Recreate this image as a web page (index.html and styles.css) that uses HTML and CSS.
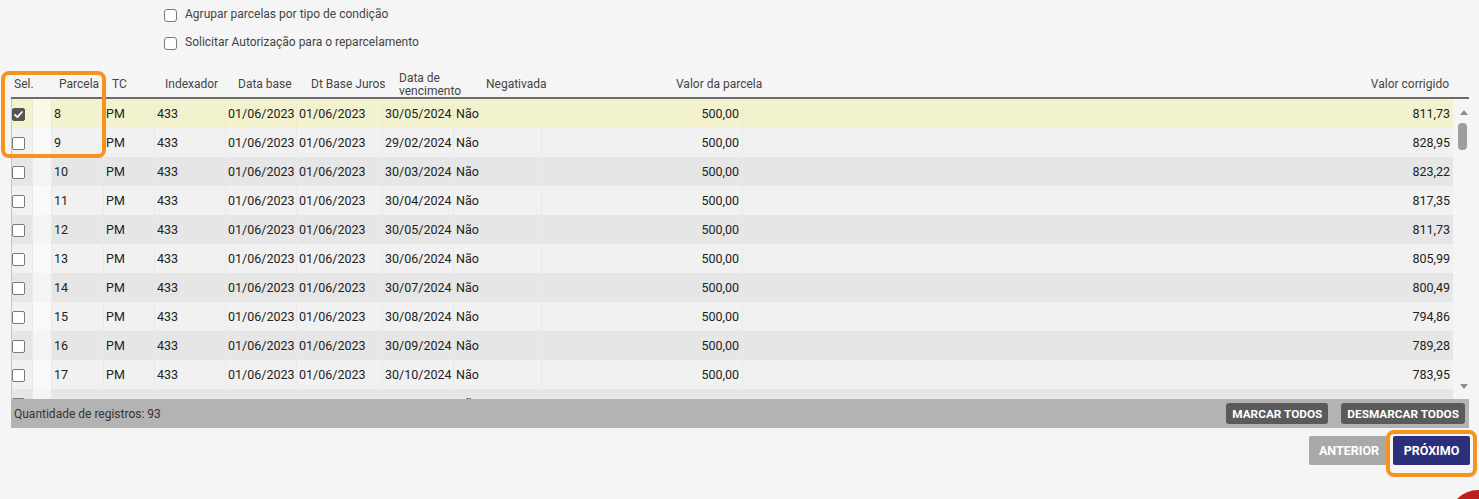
FILE: index.html
```html
<!DOCTYPE html>
<html lang="pt-BR">
<head>
<meta charset="utf-8">
<title>Reparcelamento</title>
<link rel="stylesheet" href="styles.css">
</head>
<body>
<div class="options">
  <label class="opt"><span class="cb"></span>Agrupar parcelas por tipo de condição</label>
  <label class="opt"><span class="cb"></span>Solicitar Autorização para o reparcelamento</label>
</div>

<div class="grid">
  <div class="ghead">
    <div class="h h-sel">Sel.</div>
    <div class="h h-parc">Parcela</div>
    <div class="h h-tc">TC</div>
    <div class="h h-idx">Indexador</div>
    <div class="h h-db">Data base</div>
    <div class="h h-dbj">Dt Base Juros</div>
    <div class="h h-venc">Data de<br>vencimento</div>
    <div class="h h-neg">Negativada</div>
    <div class="h h-vp">Valor da parcela</div>
    <div class="h h-vc">Valor corrigido</div>
  </div>
  <div class="gbody">
    <div class="rows">
      <div class="row selected"><div class="c"><span class="rcb checked"><svg viewBox="0 0 13 13" width="13" height="13"><path d="M3 6.8 L5.4 9.2 L10 4" fill="none" stroke="#fff" stroke-width="1.8" stroke-linecap="round" stroke-linejoin="round"/></svg></span></div><div class="c c-rh"></div><div class="c">8</div><div class="c">PM</div><div class="c">433</div><div class="c">01/06/2023</div><div class="c">01/06/2023</div><div class="c">30/05/2024</div><div class="c">Não</div><div class="c r">500,00</div><div class="c r last">811,73</div></div>
      <div class="row"><div class="c"><span class="rcb"></span></div><div class="c c-rh"></div><div class="c">9</div><div class="c">PM</div><div class="c">433</div><div class="c">01/06/2023</div><div class="c">01/06/2023</div><div class="c">29/02/2024</div><div class="c">Não</div><div class="c r">500,00</div><div class="c r last">828,95</div></div>
      <div class="row"><div class="c"><span class="rcb"></span></div><div class="c c-rh"></div><div class="c">10</div><div class="c">PM</div><div class="c">433</div><div class="c">01/06/2023</div><div class="c">01/06/2023</div><div class="c">30/03/2024</div><div class="c">Não</div><div class="c r">500,00</div><div class="c r last">823,22</div></div>
      <div class="row"><div class="c"><span class="rcb"></span></div><div class="c c-rh"></div><div class="c">11</div><div class="c">PM</div><div class="c">433</div><div class="c">01/06/2023</div><div class="c">01/06/2023</div><div class="c">30/04/2024</div><div class="c">Não</div><div class="c r">500,00</div><div class="c r last">817,35</div></div>
      <div class="row"><div class="c"><span class="rcb"></span></div><div class="c c-rh"></div><div class="c">12</div><div class="c">PM</div><div class="c">433</div><div class="c">01/06/2023</div><div class="c">01/06/2023</div><div class="c">30/05/2024</div><div class="c">Não</div><div class="c r">500,00</div><div class="c r last">811,73</div></div>
      <div class="row"><div class="c"><span class="rcb"></span></div><div class="c c-rh"></div><div class="c">13</div><div class="c">PM</div><div class="c">433</div><div class="c">01/06/2023</div><div class="c">01/06/2023</div><div class="c">30/06/2024</div><div class="c">Não</div><div class="c r">500,00</div><div class="c r last">805,99</div></div>
      <div class="row"><div class="c"><span class="rcb"></span></div><div class="c c-rh"></div><div class="c">14</div><div class="c">PM</div><div class="c">433</div><div class="c">01/06/2023</div><div class="c">01/06/2023</div><div class="c">30/07/2024</div><div class="c">Não</div><div class="c r">500,00</div><div class="c r last">800,49</div></div>
      <div class="row"><div class="c"><span class="rcb"></span></div><div class="c c-rh"></div><div class="c">15</div><div class="c">PM</div><div class="c">433</div><div class="c">01/06/2023</div><div class="c">01/06/2023</div><div class="c">30/08/2024</div><div class="c">Não</div><div class="c r">500,00</div><div class="c r last">794,86</div></div>
      <div class="row"><div class="c"><span class="rcb"></span></div><div class="c c-rh"></div><div class="c">16</div><div class="c">PM</div><div class="c">433</div><div class="c">01/06/2023</div><div class="c">01/06/2023</div><div class="c">30/09/2024</div><div class="c">Não</div><div class="c r">500,00</div><div class="c r last">789,28</div></div>
      <div class="row"><div class="c"><span class="rcb"></span></div><div class="c c-rh"></div><div class="c">17</div><div class="c">PM</div><div class="c">433</div><div class="c">01/06/2023</div><div class="c">01/06/2023</div><div class="c">30/10/2024</div><div class="c">Não</div><div class="c r">500,00</div><div class="c r last">783,95</div></div>
      <div class="row"><div class="c"><span class="rcb"></span></div><div class="c c-rh"></div><div class="c">18</div><div class="c">PM</div><div class="c">433</div><div class="c">01/06/2023</div><div class="c">01/06/2023</div><div class="c">30/11/2024</div><div class="c">Não</div><div class="c r">500,00</div><div class="c r last">778,48</div></div>
    </div>
    <div class="scroll">
      <span class="tri-up"></span>
      <span class="thumb"></span>
      <span class="spacer"></span>
      <span class="tri-down"></span>
    </div>
  </div>
  <div class="gfoot">
    <span class="count">Quantidade de registros: 93</span>
    <div class="fbtns">
      <button class="fbtn">MARCAR TODOS</button>
      <button class="fbtn">DESMARCAR TODOS</button>
    </div>
  </div>
</div>

<div class="actions">
  <button class="btn prev">ANTERIOR</button>
  <button class="btn next">PRÓXIMO</button>
</div>

<div class="hl hl-cols"></div>
<div class="hl hl-next"></div>
<div class="fab"></div>
</body>
</html>
```

FILE: styles.css
```css
* { box-sizing: border-box; }

html { overflow: hidden; }

body {
  margin: 0;
  width: 1479px;
  height: 499px;
  overflow: hidden;
  position: relative;
  background: #f5f5f5;
  font-family: Roboto, "Liberation Sans", sans-serif;
  font-size: 12px;
  color: #222;
}

/* top options */
.options {
  display: flex;
  flex-direction: column;
  padding: 0 0 0 164px;
}
.opt {
  height: 28px;
  display: flex;
  align-items: center;
  gap: 8px;
  color: #444;
}
.cb {
  flex: none;
  width: 13px;
  height: 13px;
  margin-top: 2px;
  border: 1px solid #7a7a7a;
  border-radius: 3px;
  background: #fff;
}

/* grid */
.grid {
  margin: 12px 0 0 11px;
  width: 1458px;
}
.ghead {
  height: 31px;
  padding-top: 4px;
  border-bottom: 2px solid #6b6b6b;
  display: flex;
  align-items: center;
  color: #444;
}
.h {
  flex: none;
  padding-left: 3px;
  line-height: 13px;
  white-space: nowrap;
}
.h-sel { width: 45px; }
.h-parc { width: 53px; }
.h-tc { width: 53px; }
.h-idx { width: 73px; }
.h-db { width: 73px; }
.h-dbj { width: 88px; }
.h-venc { width: 87px; }
.h-neg { width: 190px; }
.h-vp { width: 110px; }
.h-vc { flex: 1; text-align: right; padding-right: 20px; }

.gbody {
  height: 300px;
  display: flex;
  overflow: hidden;
}
.rows {
  width: 1442px;
  flex: none;
  border-left: 1px solid #c6c6c6;
  font-size: 12.5px;
}
.row {
  display: grid;
  grid-template-columns: 21px 19px 52px 51px 71px 71px 86px 71px 88px 201px 710px;
  height: 29px;
  background: #f1f1f1;
}
.row:nth-child(odd) { background: #e6e6e6; }
.row.selected { background: #f3f2cf; }

.c {
  display: flex;
  align-items: center;
  padding-left: 2px;
  border-right: 1px solid #e9e9e9;
  white-space: nowrap;
  overflow: hidden;
}
.row.selected .c { border-right-color: #ecebd0; }
.c.r { justify-content: flex-end; padding: 0 3px 0 0; }
.c.last { border-right: none; }
.c:first-child { padding-left: 0; }
.c-rh { background: rgba(255, 255, 255, 0.55); }

.rcb {
  width: 13px;
  height: 13px;
  margin-top: 2px;
  border: 1px solid #7a7a7a;
  border-radius: 2px;
  background: #fff;
  display: block;
}
.rcb.checked {
  border-color: #555;
  background: #555;
  position: relative;
}
.rcb.checked svg {
  position: absolute;
  left: -1px;
  top: -1px;
}

.scroll {
  width: 16px;
  flex: none;
  display: flex;
  flex-direction: column;
}
.tri-up {
  margin: 11px 0 0 7px;
  width: 0;
  height: 0;
  border-left: 4px solid transparent;
  border-right: 4px solid transparent;
  border-bottom: 5px solid #8f8f8f;
}
.thumb {
  margin: 8px 0 0 5px;
  width: 9px;
  height: 27px;
  border-radius: 4px;
  background: #9d9d9d;
}
.spacer { flex: 1; }
.tri-down {
  margin: 0 0 10px 7px;
  width: 0;
  height: 0;
  border-left: 4px solid transparent;
  border-right: 4px solid transparent;
  border-top: 5px solid #8f8f8f;
}

.gfoot {
  height: 29px;
  background: #b3b3b3;
  display: flex;
  align-items: center;
  justify-content: space-between;
  padding: 0 4px 0 3px;
  color: #333;
}
.fbtns { display: flex; gap: 13px; }
.fbtn {
  height: 21px;
  padding: 0 6px;
  border: none;
  border-radius: 3px;
  background: #5a5a5a;
  color: #fff;
  font-family: Roboto, "Liberation Sans", sans-serif;
  font-size: 11.8px;
  font-weight: 700;
}

/* actions */
.actions {
  margin-top: 8px;
  display: flex;
  justify-content: flex-end;
  gap: 4px;
  padding-right: 9px;
}
.btn {
  height: 29px;
  border: none;
  border-radius: 2px;
  color: #fff;
  font-family: Roboto, "Liberation Sans", sans-serif;
  font-size: 12.5px;
  font-weight: 700;
}
.btn.prev { width: 80px; background: #a9a9a9; }
.btn.next { width: 77px; background: #2b2f7c; }

/* annotation overlays */
.hl {
  position: absolute;
  border: 4px solid #f6921e;
  border-radius: 8px;
}
.hl-cols { left: 1px; top: 71px; width: 105px; height: 87px; }
.hl-next { left: 1386px; top: 430px; width: 91px; height: 47px; }

.fab {
  position: absolute;
  left: 1449px;
  top: 490px;
  width: 58px;
  height: 58px;
  border-radius: 50%;
  background: #bd1f1f;
}
```
